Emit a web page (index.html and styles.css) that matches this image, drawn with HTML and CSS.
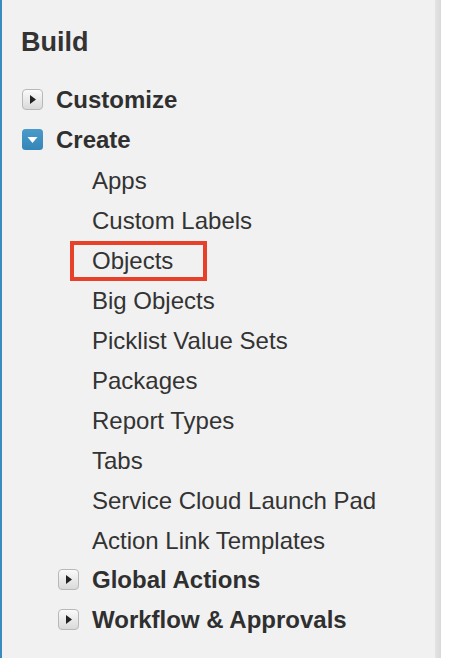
FILE: index.html
```html
<!DOCTYPE html>
<html>
<head>
<meta charset="utf-8">
<link rel="stylesheet" href="styles.css">
</head>
<body>
<div class="panel">
  <h2 class="title">Build</h2>
  <div class="row">
    <svg class="icon" width="21" height="21" viewBox="0 0 21 21">
      <defs>
        <linearGradient id="g1" x1="0" y1="0" x2="0" y2="1">
          <stop offset="0" stop-color="#fbfbfb"/>
          <stop offset="1" stop-color="#d9d9d9"/>
        </linearGradient>
      </defs>
      <rect x="0.5" y="0.5" width="20" height="20" rx="3.5" fill="url(#g1)" stroke="#b8b8b8"/>
      <polygon points="8,6 14,10.5 8,15" fill="#222"/>
    </svg>
    <span class="label">Customize</span>
  </div>
  <div class="row">
    <svg class="icon" width="21" height="21" viewBox="0 0 21 21">
      <defs>
        <linearGradient id="g2" x1="0" y1="0" x2="0" y2="1">
          <stop offset="0" stop-color="#4a9acb"/>
          <stop offset="1" stop-color="#3585b8"/>
        </linearGradient>
      </defs>
      <rect x="0" y="0" width="21" height="21" rx="3.5" fill="url(#g2)"/>
      <polygon points="5.5,8 15.5,8 10.5,14" fill="#fff"/>
    </svg>
    <span class="label">Create</span>
  </div>
  <ul class="items">
    <li class="item">Apps</li>
    <li class="item">Custom Labels</li>
    <li class="item marked">Objects<span class="highlight"></span></li>
    <li class="item">Big Objects</li>
    <li class="item">Picklist Value Sets</li>
    <li class="item">Packages</li>
    <li class="item">Report Types</li>
    <li class="item">Tabs</li>
    <li class="item">Service Cloud Launch Pad</li>
    <li class="item">Action Link Templates</li>
  </ul>
  <div class="subgroup">
    <div class="row">
      <svg class="icon" width="21" height="21" viewBox="0 0 21 21">
        <rect x="0.5" y="0.5" width="20" height="20" rx="3.5" fill="url(#g1)" stroke="#b8b8b8"/>
        <polygon points="8,6 14,10.5 8,15" fill="#222"/>
      </svg>
      <span class="label">Global Actions</span>
    </div>
    <div class="row">
      <svg class="icon" width="21" height="21" viewBox="0 0 21 21">
        <rect x="0.5" y="0.5" width="20" height="20" rx="3.5" fill="url(#g1)" stroke="#b8b8b8"/>
        <polygon points="8,6 14,10.5 8,15" fill="#222"/>
      </svg>
      <span class="label">Workflow &amp; Approvals</span>
    </div>
  </div>
</div>
</body>
</html>
```
FILE: styles.css
```css
html, body {
  margin: 0;
  padding: 0;
  background: #ffffff;
}
body {
  font-family: "Liberation Sans", Arial, Helvetica, sans-serif;
  color: #333333;
}
.panel {
  box-sizing: border-box;
  width: 441px;
  height: 658px;
  border-left: 2px solid #3a8bbd;
  background: linear-gradient(to right, #f1f1f1 0, #f1f1f1 calc(100% - 6px), #e4e4e4 calc(100% - 6px), #d9d9d9 100%);
  padding: 26px 0 0 20px;
  overflow: hidden;
}
.title {
  margin: 0 0 22px -1px;
  font-size: 27px;
  line-height: 32px;
  font-weight: bold;
  color: #333333;
}
.row {
  display: flex;
  align-items: center;
  gap: 13px;
  height: 40px;
}
.icon {
  flex: none;
  display: block;
  margin-top: -1px;
}
.label {
  font-size: 24px;
  line-height: 40px;
  font-weight: bold;
  color: #2f2f2f;
}
.items {
  list-style: none;
  margin: 1px 0 0 0;
  padding: 0 0 0 70px;
}
.item {
  font-size: 24px;
  line-height: 40px;
  height: 40px;
  color: #333333;
}
.marked {
  position: relative;
}
.highlight {
  position: absolute;
  left: -22px;
  top: 0;
  width: 137px;
  height: 40px;
  box-sizing: border-box;
  border: 4px solid #e8412a;
}
.subgroup {
  margin-top: -1px;
  padding-left: 36px;
}
```
